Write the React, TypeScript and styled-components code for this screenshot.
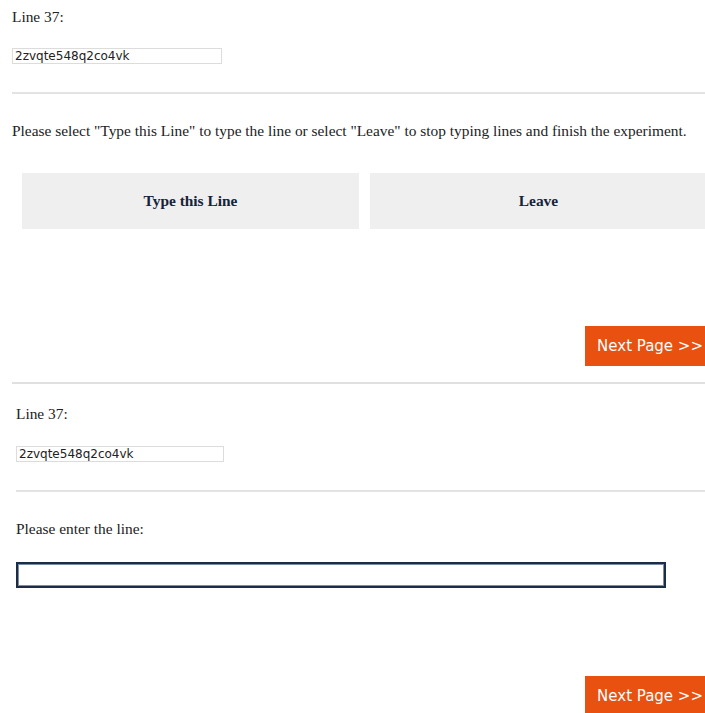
import styled, { createGlobalStyle } from 'styled-components';

const GlobalStyle = createGlobalStyle`
  html, body {
    margin: 0;
    padding: 0;
    background: #ffffff;
    overflow: hidden;
  }
  body {
    font-family: 'Liberation Serif', 'Times New Roman', serif;
    color: #222222;
  }
`;

const LINE_NO = 37;
const LINE_TEXT = '2zvqte548q2co4vk';

const App = () => {
  return (
    <>
      <GlobalStyle />
      <Screen>
        {/* choice page */}
        <Page $inset={12}>
          <Label $top={8}>Line {LINE_NO}:</Label>
          <LineBox readOnly value={LINE_TEXT} $top={22} />
          <Divider $top={28} />
          <Label $top={28}>
            Please select "Type this Line" to type the line or select "Leave" to
            stop typing lines and finish the experiment.
          </Label>
          <ChoiceRow>
            <ChoiceButton>Type this Line</ChoiceButton>
            <ChoiceButton>Leave</ChoiceButton>
          </ChoiceRow>
          <NextRow $top={97}>
            <NextButton>Next Page &gt;&gt;</NextButton>
          </NextRow>
        </Page>
        <PageBreak />
        {/* typing page */}
        <Page $inset={16}>
          <Label $top={21}>Line {LINE_NO}:</Label>
          <LineBox readOnly value={LINE_TEXT} $top={23} $width={208} />
          <Divider $top={28} />
          <Label $top={28}>Please enter the line:</Label>
          <TypeInput autoFocus />
          <NextRow $top={88}>
            <NextButton>Next Page &gt;&gt;</NextButton>
          </NextRow>
        </Page>
      </Screen>
    </>
  );
};

export default App;

const Screen = styled.div`
  width: 720px;
  display: flex;
  flex-direction: column;
`;

const Page = styled.section<{ $inset: number }>`
  display: flex;
  flex-direction: column;
  padding-left: ${p => p.$inset}px;
  padding-right: 5px;
`;

const Label = styled.p<{ $top: number }>`
  margin: ${p => p.$top}px 0 0 0;
  font-size: 15.4px;
  line-height: 18px;
  color: #222222;
  white-space: nowrap;
`;

const LineBox = styled.input<{ $top: number; $width?: number }>`
  box-sizing: border-box;
  margin-top: ${p => p.$top}px;
  width: ${p => p.$width ?? 210}px;
  height: 16px;
  padding: 0 2px;
  border: 1px solid #dcdcdc;
  background: #ffffff;
  font-family: 'DejaVu Sans', Verdana, sans-serif;
  font-size: 12px;
  color: #222222;
  outline: none;
`;

const Divider = styled.hr<{ $top: number }>`
  width: 100%;
  margin: ${p => p.$top}px 0 0 0;
  border: none;
  height: 2px;
  background: #e3e3e3;
`;

const ChoiceRow = styled.div`
  display: flex;
  gap: 11px;
  margin: 33px 8px 0 10px;
`;

const ChoiceButton = styled.button`
  flex: 1;
  height: 56px;
  border: none;
  background: #efefef;
  font-family: 'Liberation Serif', 'Times New Roman', serif;
  font-weight: bold;
  font-size: 15.4px;
  color: #15233a;
  cursor: pointer;
`;

const NextRow = styled.div<{ $top: number }>`
  display: flex;
  justify-content: flex-end;
  margin-top: ${p => p.$top}px;
`;

const NextButton = styled.button`
  height: 40px;
  padding: 0 12px;
  border: none;
  background: #e8510f;
  color: #ffffff;
  font-family: 'DejaVu Sans', Verdana, sans-serif;
  font-size: 15px;
  cursor: pointer;
`;

const PageBreak = styled.hr`
  margin: 16px 5px 0 12px;
  border: none;
  height: 2px;
  background: #e0e0e0;
`;

const TypeInput = styled.input`
  box-sizing: border-box;
  margin-top: 24px;
  width: 650px;
  height: 26px;
  padding: 0 2px;
  border: 2px solid #1b2c47;
  background: #ffffff;
  font-family: 'DejaVu Sans', Verdana, sans-serif;
  font-size: 13px;
  color: #222222;
  outline: none;
  box-shadow: inset 0 0 0 1px #7d8ca3;
`;
